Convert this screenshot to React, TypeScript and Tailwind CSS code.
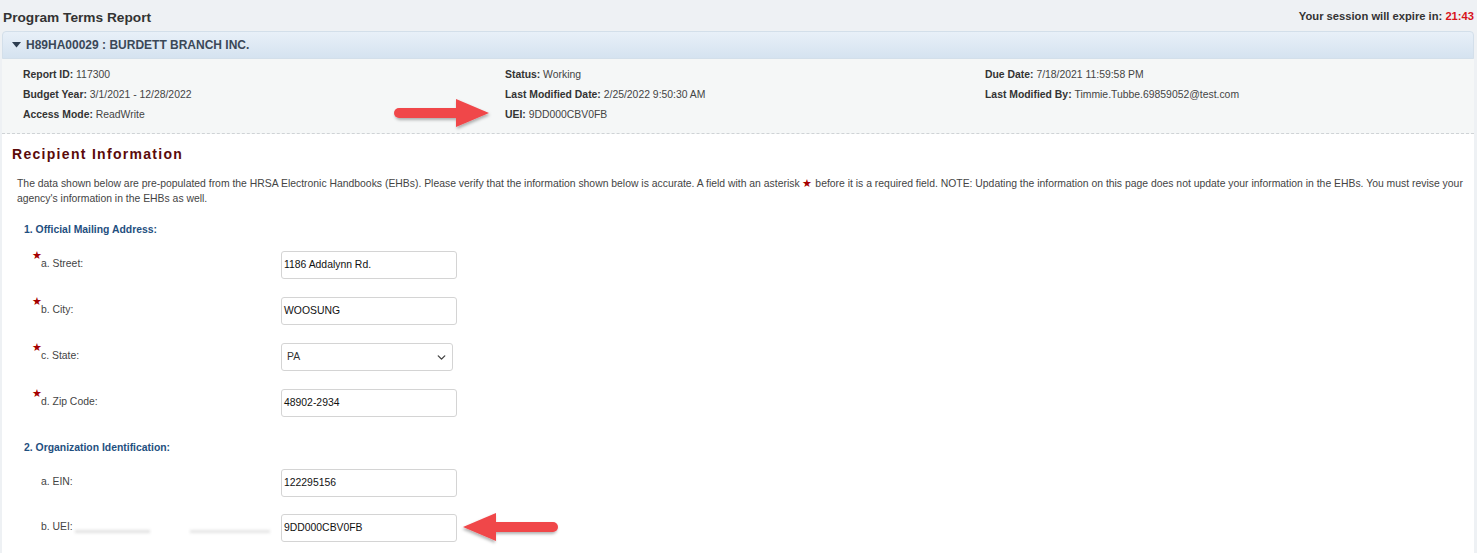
import { ChevronDown } from 'lucide-react';

const font = { fontFamily: '"Liberation Sans", Arial, sans-serif' };

const info = [
  [
    ['Report ID:', '117300'],
    ['Budget Year:', '3/1/2021 - 12/28/2022'],
    ['Access Mode:', 'ReadWrite'],
  ],
  [
    ['Status:', 'Working'],
    ['Last Modified Date:', '2/25/2022 9:50:30 AM'],
    ['UEI:', '9DD000CBV0FB'],
  ],
  [
    ['Due Date:', '7/18/2021 11:59:58 PM'],
    ['Last Modified By:', 'Timmie.Tubbe.69859052@test.com'],
  ],
];

function Star() {
  return <span className="absolute left-[-9px] top-[-9px] text-[11px] text-[#a50000]">★</span>;
}

function Arrow({ dir, className }: { dir: 'left' | 'right'; className: string }) {
  return (
    <svg
      width="100"
      height="36"
      viewBox="0 0 100 36"
      className={className}
      style={{ transform: dir === 'left' ? 'scaleX(-1)' : undefined }}
    >
      <defs>
        <filter id={`sh-${dir}`} x="-10%" y="-30%" width="130%" height="170%">
          <feDropShadow dx="1" dy="2" stdDeviation="1.5" floodColor="#000" floodOpacity="0.3" />
        </filter>
      </defs>
      <g filter={`url(#sh-${dir})`}>
        <line x1="7" y1="17" x2="68" y2="17" stroke="#f0464a" strokeWidth="10" strokeLinecap="round" />
        <polygon points="64,3 97,17 64,31" fill="#f0464a" />
      </g>
    </svg>
  );
}

function Field({
  label,
  value,
  required,
  select,
  blur,
}: {
  label: string;
  value: string;
  required?: boolean;
  select?: boolean;
  blur?: boolean;
}) {
  return (
    <div className="flex items-start">
      <div className="flex w-[266px] shrink-0 items-center whitespace-nowrap pl-[26px] pt-[6px] text-[10.4px] leading-[14px] text-[#444]">
        <span className="relative">
          {required && <Star />}
          {label}
        </span>
        {blur && (
          <span className="ml-[2px] mt-[8px] flex gap-[40px]">
            <span className="h-[3px] w-[75px] bg-[#e0e0e0] blur-[1.5px]" />
            <span className="h-[3px] w-[80px] bg-[#e4e4e4] blur-[1.5px]" />
          </span>
        )}
      </div>
      {select ? (
        <div className="flex h-[28px] w-[172px] items-center justify-between rounded-[3px] border border-[#d4d4d4] bg-white pl-[5px] pr-[4px] text-[10.4px] text-[#333]">
          <span>{value}</span>
          <ChevronDown size={13} strokeWidth={2.5} className="text-[#444]" />
        </div>
      ) : (
        <div className="flex h-[28px] w-[176px] items-center rounded-[3px] border border-[#d4d4d4] bg-white pl-[2px] text-[10.4px] text-[#111]">
          {value}
        </div>
      )}
    </div>
  );
}

export default function App() {
  return (
    <div className="relative h-[553px] w-[1477px] overflow-hidden bg-[#eef1f4]" style={font}>
      <div className="flex h-[31px] items-center justify-between pl-[3px] pr-[3px] pt-[5px]">
        <h1 className="text-[13.7px] font-bold text-[#333]">Program Terms Report</h1>
        <div className="mt-[-4px] text-[11.2px] font-bold text-[#333]">
          Your session will expire in: <span className="text-[#d8131b]">21:43</span>
        </div>
      </div>

      <div className="ml-[2px] mr-[3px]">
        <div className="flex h-[28px] items-center gap-[5px] rounded-t-[4px] border border-[#d3dfea] bg-gradient-to-b from-[#e8f0f8] to-[#d5e3f0] pl-[9px]">
          <svg width="9" height="6" viewBox="0 0 9 6">
            <polygon points="0,0 9,0 4.5,5.5" fill="#2d3d50" />
          </svg>
          <span className="text-[12px] font-bold text-[#3b4858]">H89HA00029 : BURDETT BRANCH INC.</span>
        </div>

        <div className="grid grid-cols-[482px_480px_1fr] border-b border-dashed border-[#cfd3d6] bg-[#f5f7f7] pb-[8px] pl-[21px] pt-[6px] text-[10.4px] text-[#444]">
          {info.map((col, i) => (
            <div key={i}>
              {col.map(([k, v]) => (
                <div key={k} className="flex h-[20px] items-center">
                  <span className="font-bold text-[#333]">{k}</span>&nbsp;{v}
                </div>
              ))}
            </div>
          ))}
        </div>

        <div className="h-[420px] bg-white pl-[10px] pt-[10px]">
          <h2 className="text-[14px] font-bold tracking-[1.3px] text-[#5b0a0a]">Recipient Information</h2>
          <p className="mt-[11px] pl-[5px] pr-[3px] text-[10.4px] leading-[15px] text-[#444]">
            The data shown below are pre-populated from the HRSA Electronic Handbooks (EHBs). Please verify that the
            information shown below is accurate. A field with an asterisk{' '}
            <span className="text-[11px] text-[#a50000]">★</span> before it is a required field. NOTE: Updating the
            information on this page does not update your information in the EHBs. You must revise your agency's
            information in the EHBs as well.
          </p>

          <div className="mt-[17px] pl-[12px] text-[10.4px] font-bold leading-[14px] text-[#1f4f80]">
            1. Official Mailing Address:
          </div>
          <div className="mt-[14px] flex flex-col gap-[18px] pl-[3px]">
            <Field required label="a. Street:" value="1186 Addalynn Rd." />
            <Field required label="b. City:" value="WOOSUNG" />
            <Field required select label="c. State:" value="PA" />
            <Field required label="d. Zip Code:" value="48902-2934" />
          </div>

          <div className="mt-[24px] pl-[12px] text-[10.4px] font-bold leading-[14px] text-[#1f4f80]">
            2. Organization Identification:
          </div>
          <div className="mt-[14px] flex flex-col gap-[17px] pl-[3px]">
            <Field label="a. EIN:" value="122295156" />
            <Field blur label="b. UEI:" value="9DD000CBV0FB" />
          </div>
        </div>
      </div>

      <Arrow dir="right" className="absolute left-[392px] top-[96px]" />
      <Arrow dir="left" className="absolute left-[460px] top-[510px]" />
    </div>
  );
}
